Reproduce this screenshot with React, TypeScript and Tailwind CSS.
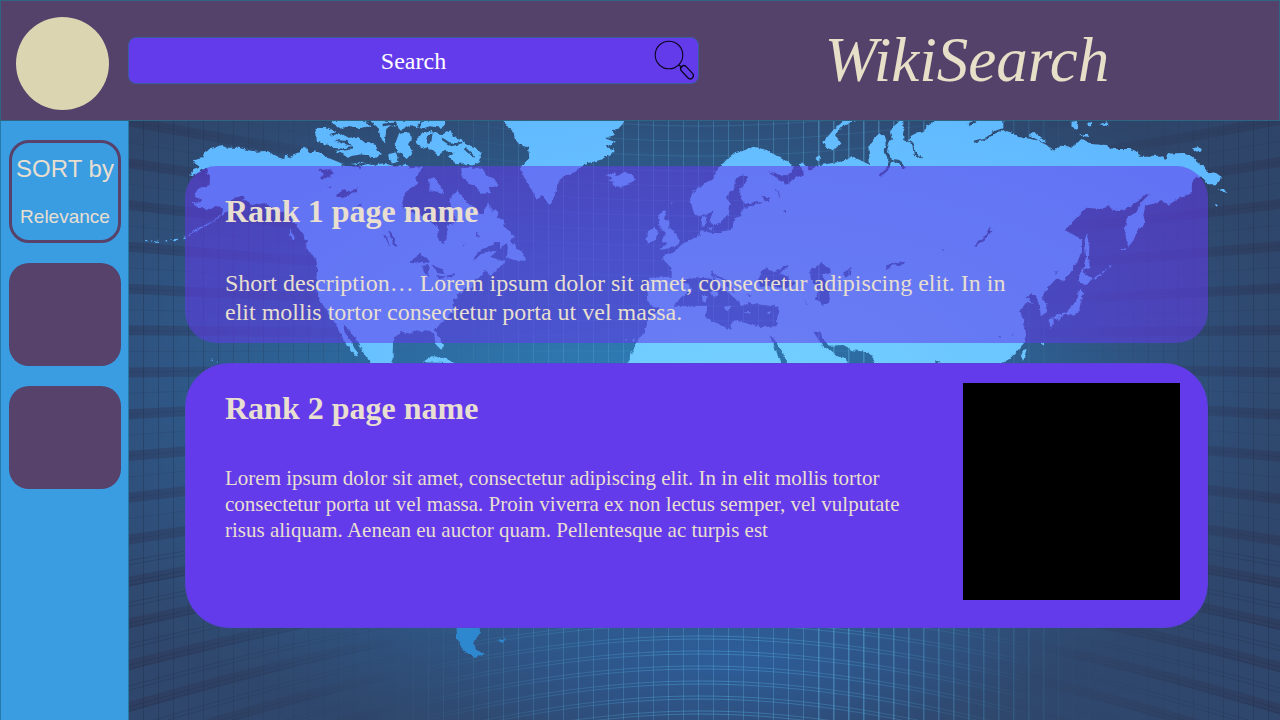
import React from "react";

const verticals = Array.from({ length: 79 }, (_, i) => 128 + i * 15);
const arcs = Array.from({ length: 44 }, (_, i) => 96 + i * 15);

function arcPath(y: number) {
  const b = (y - 350) * 0.44;
  return `M90,${y + b} C350,${y + b * 0.3} 540,${y} 700,${y} S1060,${y + b * 0.3} 1310,${y + b}`;
}

function WorldMap() {
  return (
    <svg
      className="absolute inset-0 h-full w-full"
      viewBox="129 121 1151 599"
      preserveAspectRatio="xMidYMin slice"
      aria-hidden="true"
    >
      <defs>
        <radialGradient id="sea" gradientUnits="userSpaceOnUse" cx="0" cy="0" r="1" gradientTransform="translate(640 380) scale(660 370)">
          <stop offset="0" stopColor="#2e7cb4" />
          <stop offset="0.45" stopColor="#2c679c" />
          <stop offset="0.78" stopColor="#2f527f" />
          <stop offset="1" stopColor="#2f476c" />
        </radialGradient>
        <linearGradient id="haze" x1="0" y1="0" x2="0" y2="1">
          <stop offset="0" stopColor="#2c4263" stopOpacity="0.35" />
          <stop offset="0.25" stopColor="#2c4263" stopOpacity="0" />
          <stop offset="1" stopColor="#2c4263" stopOpacity="0" />
        </linearGradient>
        <radialGradient id="glow" gradientUnits="userSpaceOnUse" cx="0" cy="0" r="1" gradientTransform="translate(740 660) scale(300 110)">
          <stop offset="0" stopColor="#2c62a4" stopOpacity="0.7" />
          <stop offset="1" stopColor="#2c5694" stopOpacity="0" />
        </radialGradient>
        <radialGradient id="land" gradientUnits="userSpaceOnUse" cx="0" cy="0" r="1" gradientTransform="translate(740 380) scale(620 300)">
          <stop offset="0" stopColor="#74d0ff" />
          <stop offset="1" stopColor="#60b8ff" />
        </radialGradient>
        <linearGradient id="lines" gradientUnits="userSpaceOnUse" x1="128" y1="0" x2="1280" y2="0">
          <stop offset="0" stopColor="#1d2b47" stopOpacity="0.35" />
          <stop offset="0.22" stopColor="#28405f" stopOpacity="0.2" />
          <stop offset="0.36" stopColor="#49a2d2" stopOpacity="0.22" />
          <stop offset="0.5" stopColor="#4fb0e0" stopOpacity="0.42" />
          <stop offset="0.66" stopColor="#49a2d2" stopOpacity="0.3" />
          <stop offset="0.82" stopColor="#28405f" stopOpacity="0.2" />
          <stop offset="1" stopColor="#1d2b47" stopOpacity="0.35" />
        </linearGradient>
        <linearGradient id="columns" gradientUnits="userSpaceOnUse" x1="128" y1="0" x2="1280" y2="0">
          <stop offset="0" stopColor="#1d2b47" stopOpacity="0.5" />
          <stop offset="0.2" stopColor="#28405f" stopOpacity="0.25" />
          <stop offset="0.36" stopColor="#5aa8d8" stopOpacity="0.35" />
          <stop offset="0.64" stopColor="#5aa8d8" stopOpacity="0.5" />
          <stop offset="0.76" stopColor="#4088b4" stopOpacity="0.3" />
          <stop offset="0.86" stopColor="#28405f" stopOpacity="0.25" />
          <stop offset="1" stopColor="#1d2b47" stopOpacity="0.5" />
        </linearGradient>
        <linearGradient id="bands" gradientUnits="userSpaceOnUse" x1="128" y1="0" x2="1280" y2="0">
          <stop offset="0" stopColor="#2b3050" stopOpacity="0.38" />
          <stop offset="0.24" stopColor="#2b3050" stopOpacity="0" />
          <stop offset="0.76" stopColor="#2b3050" stopOpacity="0" />
          <stop offset="1" stopColor="#2b3050" stopOpacity="0.38" />
        </linearGradient>
        <filter id="coast" filterUnits="userSpaceOnUse" x="128" y="110" width="1160" height="620">
          <feTurbulence type="fractalNoise" baseFrequency="0.22" numOctaves="3" seed="7" result="noise" />
          <feDisplacementMap in="SourceGraphic" in2="noise" scale="4" xChannelSelector="R" yChannelSelector="G" />
        </filter>
        <mask id="continents" maskUnits="userSpaceOnUse" x="128" y="110" width="1160" height="620">
          <g filter="url(#coast)">
          <g transform="translate(128 115) scale(0.333333)">
            <path
              fill="#fff"
              d="M198,135 222,130 228,115 245,102 283,93 300,98 330,98 362,106 385,110 410,108 440,120 465,132 478,120 485,132 496,118 516,112 530,95 545,112 570,108 600,128 640,145 660,150 700,140 730,150 780,143 800,155 830,148 850,160 885,155 862,188 868,208 832,232 820,275 850,290 880,300 920,330 930,340 932,375 948,385 958,365 955,335 985,318 970,282 965,250 988,228 1005,245 1020,265 1050,290 1062,300 1080,262 1092,290 1105,285 1112,310 1130,322 1128,335 1150,350 1158,370 1140,380 1100,382 1085,395 1062,402 1040,425 1034,440 1058,418 1092,405 1106,410 1090,425 1120,438 1134,436 1128,448 1108,462 1086,484 1075,465 1050,490 1040,500 1026,530 1010,516 1002,532 985,535 990,550 976,548 974,572 980,586 962,604 932,630 920,645 935,672 945,690 940,705 925,690 915,655 900,645 885,652 862,645 845,656 820,650 798,668 795,684 793,752 732,752 690,684 660,640 643,625 650,650 670,680 690,722 684,724 655,690 645,670 620,620 590,580 572,545 563,510 568,460 565,430 540,408 530,385 540,380 515,345 492,318 485,296 440,282 410,264 380,270 345,256 320,245 300,270 300,285 268,312 220,340 176,364 210,340 250,320 280,300 288,282 270,274 244,282 212,278 190,265 220,258 200,240 212,222 245,210 246,182 222,170 184,182 196,162 215,155 200,145z
              M565,42 600,38 626,50 602,62 640,56 662,68 690,66 712,84 740,85 745,105 762,117 742,128 700,118 660,125 625,108 610,92 566,80z
              M620,17 H712 L730,34 690,40 660,32 640,42 610,22z
              M726,17 H955 L940,38 905,34 880,42 850,30 820,44 790,30 775,42 770,84 755,66 748,36z
              M812,58 840,50 852,70 840,88 855,112 836,132 812,112 800,90z M780,118 805,112 812,140 790,146z
              M862,82 880,56 912,48 940,60 968,46 975,66 1000,72 1012,88 1040,96 1060,115 1052,142 1034,152 1010,145 985,148 960,124 980,112 948,108 930,122 900,94 880,100z
              M1000,158 1060,158 1074,180 1096,190 1112,212 1082,220 1090,234 1054,236 1050,218 1022,204 1000,182z
              M900,192 922,188 936,210 950,236 905,225z
              M1135,370 1155,385 1150,400 1180,405 1196,438 1160,430 1130,430 1140,405z
              M884,742 910,724 946,726 980,745z M250,732 l8,6 -5,3z M265,738 l6,3 -5,2z
              M536,382 562,400 580,426 560,420 542,400z M486,342 l14,24 -2,10 -12,-16z"
            />
            <path
              fill="#000"
              d="M570,165 610,163 620,178 590,193 576,188 590,178z M625,240 650,222 668,230 692,216 678,234 640,248z
              M598,212 l16,4 -10,2z M686,272 l20,-4 -14,8z M690,152 700,156 696,164z M740,300 l16,-12 -4,20z
              M780,348 792,352 806,392 800,396z M770,356 l18,34 -4,2 -14,-28z
              M845,442 876,416 898,430 906,444 880,440 862,446z M882,452 906,450 900,486 888,472z M910,450 942,462 950,478 930,474 916,460z M922,482 954,484 938,492z M952,480 982,474 968,488z
              M876,402 l4,2 -2,6z M1048,350 l6,12 -12,4z M1004,392 l6,-4 -2,6z
              M216,164 240,162 238,176 222,174z M328,252 l14,-10 10,8 -18,8z
              M900,60 l14,-8 -4,30 -14,6z M620,74 l38,4 14,14 -36,-8z"
            />
            <path stroke="#000" strokeWidth="7" fill="none" d="M606,102 640,104 672,100 M640,148 680,152 740,140 M800,20 808,40 M880,20 870,36 M764,30 800,26 M740,150 768,132 790,150 M940,70 970,90 1000,84 M1010,100 1036,124" />
            <path stroke="#fff" strokeWidth="4" strokeDasharray="6 12 3 8 11 18" fill="none" d="M52,377 l40,2 60,-6 40,-14" />
          </g>
          <g transform="translate(500 115) scale(0.333333)">
            <path
              fill="#fff"
              d="M8,10 26,40 45,58 50,84 84,98 88,130 62,155 72,190 95,225 110,254 125,240 150,270 165,240 172,206 190,184 210,182 240,160 250,148 300,135 332,118 345,104 318,96 345,80 312,70 345,60 335,46 360,40 375,10z
              M318,180 345,172 350,184 372,172 398,178 408,192 388,208 360,216 335,210 342,200 322,196 338,190z
              M0,330 42,360 20,385 0,400z M15,425 30,388 44,388 52,405 70,415 76,438 40,434z
              M485,290 497,290 492,312 508,318 504,334 524,352 540,378 526,396 476,406 500,388 482,378 498,354 480,336 474,308z
              M440,352 465,335 474,352 462,380 440,386z
              M570,252 580,230 605,212 640,190 655,160 682,132 705,115 722,110 760,95 800,105 840,128 880,152 876,172 850,184 808,168 832,192 860,210 880,192 912,178 898,148 905,140 928,165 962,150 1020,140 1060,125 1110,150 1105,95 1140,55 1158,75 1155,120 1172,160 1185,130 1210,145 V760 H375 L410,680 435,650 445,612 480,578 458,572 442,560 440,530 450,488 515,485 515,460 486,430 490,420 520,412 548,386 600,360 600,306 582,296z
              M970,80 1000,45 1040,10 H1085 L1030,30 1005,60 1022,88 1000,106 980,98z
              M1170,50 1182,30 1210,10 V100 L1180,95z M946,128 l10,-6 8,8 -10,6z"
            />
            <path
              fill="#000"
              d="M596,302 618,300 640,286 628,320 645,330 664,318 686,300 690,270 678,246 700,222 708,190 730,178 744,186 738,202 720,222 722,250 736,268 770,258 786,264 748,274 724,284 720,304 704,310 696,344 664,350 640,354 612,350 596,346z
              M788,242 806,248 808,260 794,262z M826,212 l8,20 8,18 -10,-14z M850,286 l10,0 -3,8z
              M520,572 540,548 574,526 566,506 540,502 560,492 610,488 640,492 632,468 652,482 690,498 720,530 752,540 742,560 760,566 790,570 836,574 830,634 782,636 740,625 702,616 690,642 655,628 616,606 622,572 560,574z
              M776,492 786,466 804,458 826,472 866,446 854,468 838,472 862,484 884,505 868,520 800,512 780,518z
              M930,466 965,444 990,462 992,474 966,478 974,494 984,504 990,562 968,572 944,552 956,524 932,490z
              M1030,472 1056,454 1052,478 1036,488z M1156,464 1180,446 1202,444 1170,460z M912,552 l10,12 0,10z
              M808,658 824,674 860,738 862,750 842,750 828,706z
              M940,650 962,652 968,672 990,692 1030,690 1060,706 1108,712 1120,728 1134,732 1128,752 1040,752 1038,728 1010,724 985,702 968,692z"
            />
            <path
              fill="#fff"
              d="M606,306 620,302 614,334 604,336z M624,338 l14,-2 -4,12z
              M640,486 668,492 678,512 706,534 728,554 738,562 724,574 708,552 682,532 658,510z M690,506 712,504 752,548 740,572 724,562 708,540z
              M606,540 620,544 616,566 608,562z M632,530 650,530 656,540 642,548z M668,576 l24,-4 -8,14z M730,592 l22,0 -4,6z M800,594 l14,-6 -6,10z
              M376,676 l8,-6 -2,6z M396,676 l10,-8 -6,10z M512,265 l6,-4 -2,6z"
            />
          </g>
          <g transform="translate(880 115) scale(0.333333)">
            <path
              fill="#fff"
              d="M-20,70 0,55 20,70 50,85 62,68 90,75 98,58 130,52 142,30 175,10 H370 V45 L400,55 420,70 440,70 470,76 500,90 520,108 540,92 580,95 604,72 640,88 680,90 700,102 750,102 772,108 780,122 846,122 856,136 862,116 905,114 935,124 960,146 980,160 985,175 1005,172 1025,186 1008,208 985,208 964,188 944,186 935,208 936,234 900,248 865,270 846,258 820,266 796,272 790,300 796,325 776,345 745,398 734,350 740,310 770,290 776,270 810,235 800,236 770,262 748,276 722,285 700,284 690,274 660,282 620,278 598,300 582,316 556,345 585,362 606,372 606,410 590,445 566,476 545,500 528,492 502,520 484,545 502,572 500,592 482,604 480,575 470,548 452,536 436,548 405,566 402,550 420,544 440,522 436,540 448,556 462,568 440,560 420,588 432,620 438,660 432,684 410,710 388,732 360,748 V760 H-20z
              M575,20 590,17 598,36 584,46 574,34z M600,62 l20,-8 8,12z M622,24 l10,-2 2,12 -10,0z M658,28 l24,-6 4,12z M936,100 l22,-4 8,8 -16,6z M1012,222 l20,0 8,12z M1002,264 l10,2 -6,6z
              M445,60 460,50 478,62 500,80 480,78z
              M620,355 628,400 626,440 632,456 610,464 618,424 613,380z M606,460 624,484 642,488 616,510 594,500z
              M598,518 610,535 600,570 598,590 572,602 556,596 524,612 520,602 560,590 582,566 594,546z
              M506,612 520,610 522,628 512,640z M528,610 l20,-6 -12,14z M430,705 440,702 430,738 423,724z"
            />
            <path stroke="#fff" strokeWidth="4" strokeDasharray="22 6 16 10 8 7" fill="none" d="M644,490 L702,446 M722,406 l16,-8 M484,684 l8,6" />
            <path
              fill="#000"
              d="M284,390 308,370 320,356 330,334 334,350 310,378 290,393z M18,466 20,452 38,444 76,440 70,448 38,452z M186,402 l6,2 -4,2z M355,664 l8,0 -4,4z M394,658 l6,2 -4,2z M526,468 l5,6 -3,8z M558,348 580,342 578,354z
              M166,735 l18,12 -18,0z"
            />
            <path
              stroke="#000"
              strokeWidth="9"
              fill="none"
              d="M14,40 24,80 16,108 30,130 24,160 0,182 M30,135 60,140 74,162"
            />
            <path
              stroke="#000"
              strokeWidth="6"
              fill="none"
              d="M68,70 100,88 104,116 128,128 M282,80 320,70 345,50 372,42 M264,28 288,18"
            />
          </g>
          </g>
        </mask>
      </defs>
      <rect x="128" y="110" width="1160" height="620" fill="url(#sea)" />
      <rect x="128" y="110" width="1160" height="620" fill="url(#haze)" />
      <rect x="128" y="540" width="1160" height="190" fill="url(#glow)" />
      <g fill="none" stroke="url(#bands)" strokeWidth="10">
        {arcs.filter((_, i) => i % 2 === 0).map((y) => (
          <path key={y} d={arcPath(y)} />
        ))}
      </g>
      <g fill="none" stroke="url(#lines)" strokeWidth="1">
        {arcs.map((y) => (
          <path key={y} d={arcPath(y)} opacity={y < 500 ? 0.5 : 1} />
        ))}
        {arcs.filter((y) => y > 500).map((y) => (
          <path key={y} d={arcPath(y + 3)} />
        ))}
      </g>
      <g fill="url(#columns)">
        {verticals.map((x, i) => (
          <rect key={x} x={x} y="110" width={i > 45 && i < 62 ? 1.5 : 0.8} height="620" />
        ))}
      </g>
      <rect x="128" y="110" width="1160" height="620" fill="url(#land)" mask="url(#continents)" />
      <path
        filter="url(#coast)"
        fill="#2e88cf"
        d="M456,615 479,615 480,634 474,642 476,650 486,654 475,658 464,651 457,638z M497,640 l9,-2 -3,5z"
      />
    </svg>
  );
}

function MagnifierIcon() {
  return (
    <svg className="block" width="40" height="40" viewBox="0 0 40 40" fill="none" stroke="#0b0620" aria-hidden="true">
      <circle cx="15" cy="15" r="13.8" strokeWidth="1.1" />
      <path d="M25 25 L28 28" strokeWidth="1.4" />
      <rect x="-3.2" y="-7.8" width="6.4" height="15.6" rx="3.2" strokeWidth="1.3" transform="translate(33 32.2) rotate(-43)" />
    </svg>
  );
}

export default function App() {
  return (
    <div className="flex min-h-screen flex-col font-['Liberation_Serif',serif] text-[#e8dfd0]">
      <header className="flex h-[121px] items-center border border-[#2d6583] bg-[#55426a] pl-[15px]">
        <a href="#home" aria-label="Home" className="mt-1.5 size-[93px] shrink-0 rounded-full bg-[#dbd5b1]" />
        <form className="relative ml-[19px] w-[571px] shrink-0" onSubmit={(e) => e.preventDefault()}>
          <input
            type="text"
            aria-label="Search"
            placeholder="Search"
            className="block h-[47px] w-full rounded-lg border border-[#3a5d9c] bg-[#633beb] px-11 pt-0.5 text-center text-2xl text-white placeholder:text-white placeholder:opacity-100"
          />
          <button type="submit" aria-label="Submit search" className="absolute top-[3px] right-[5px]">
            <MagnifierIcon />
          </button>
        </form>
        <h1 className="flex-1 pr-11 pb-0.5 text-center text-[63px] leading-[72px] text-[#e8dfc9] italic">WikiSearch</h1>
      </header>

      <div className="flex flex-1">
        <aside className="flex w-[129px] shrink-0 flex-col gap-5 border-x border-[#2779a6] bg-[#3a9de2] px-2 pt-[19px] pr-[7px]">
          <button
            type="button"
            className="flex h-[103px] flex-col items-center gap-[22px] rounded-[20px] border-[3px] border-[#56426a] pt-3 font-['Liberation_Sans',sans-serif] whitespace-nowrap"
          >
            <span className="text-2xl leading-7">SORT by</span>
            <span className="text-[19px] leading-6">Relevance</span>
          </button>
          <button type="button" aria-label="Filter one" className="h-[103px] rounded-[20px] bg-[#56426a]" />
          <button type="button" aria-label="Filter two" className="h-[103px] rounded-[20px] bg-[#56426a]" />
        </aside>

        <main className="relative flex-1 overflow-hidden bg-[#2d4a70]">
          <WorldMap />
          <div className="relative flex flex-col gap-5 pt-[45px] pr-[72px] pb-[92px] pl-14">
            <article className="rounded-[32px] bg-[#633beb]/55 pt-[27px] pr-[180px] pb-4 pl-10">
              <h2 className="text-[32px] leading-9 font-bold">Rank 1 page name</h2>
              <p className="mt-10 text-2xl leading-[29px]">
                Short description… Lorem ipsum dolor sit amet, consectetur adipiscing elit. In in elit mollis tortor
                consectetur porta ut vel massa.
              </p>
            </article>
            <article className="flex justify-between rounded-[44px] border border-[#5a41d8] bg-[#633beb] pt-[19px] pr-[27px] pb-[27px] pl-[39px]">
              <div className="w-[700px] pt-[7px]">
                <h2 className="text-[32px] leading-9 font-bold">Rank 2 page name</h2>
                <p className="mt-[39px] text-[21px] leading-[26px]">
                  Lorem ipsum dolor sit amet, consectetur adipiscing elit. In in elit mollis tortor consectetur porta ut
                  vel massa. Proin viverra ex non lectus semper, vel vulputate risus aliquam. Aenean eu auctor quam.
                  Pellentesque ac turpis est
                </p>
              </div>
              <div className="size-[217px] shrink-0 bg-black" />
            </article>
          </div>
        </main>
      </div>
    </div>
  );
}
